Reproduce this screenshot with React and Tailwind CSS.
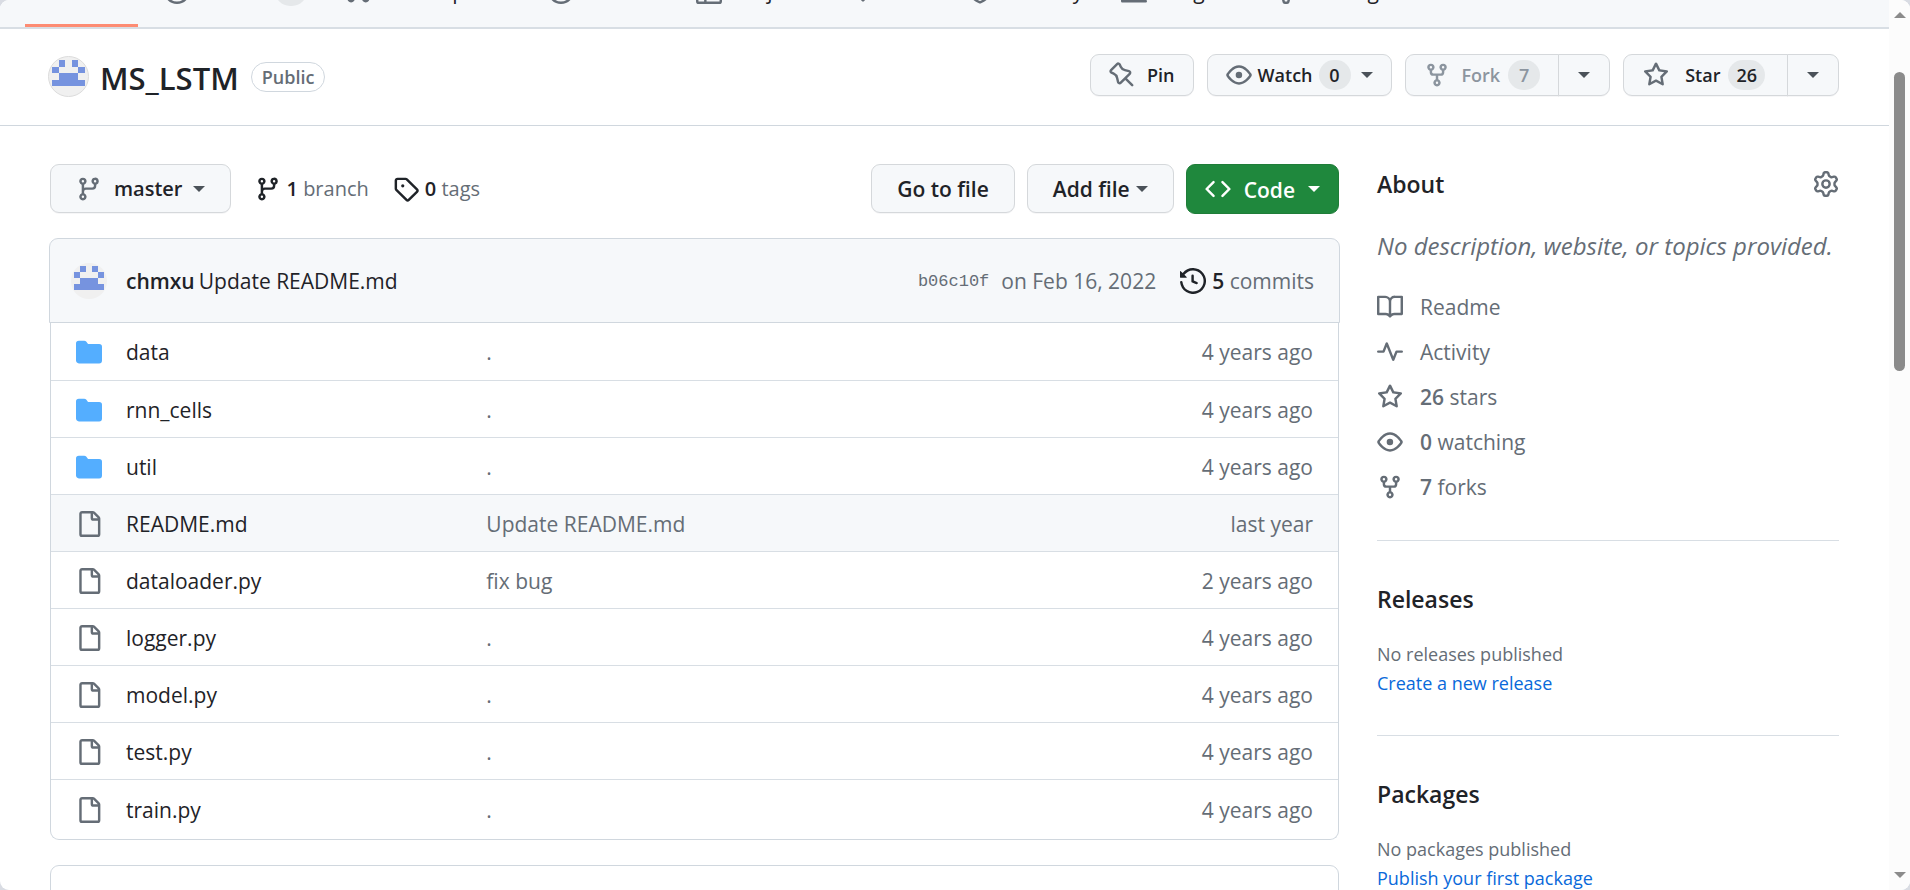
const icons = {
  pin: "M4.456.734a1.75 1.75 0 012.826.504l.613 1.327a3.081 3.081 0 002.084 1.707l2.454.584c1.332.317 1.8 1.972.832 2.94L11.06 10l3.72 3.72a.75.75 0 11-1.061 1.06L10 11.06l-2.204 2.205c-.968.968-2.623.5-2.94-.832l-.584-2.454a3.081 3.081 0 00-1.707-2.084l-1.327-.613a1.75 1.75 0 01-.504-2.826L4.456.734zM5.92 1.866a.25.25 0 00-.404-.072L1.794 5.516a.25.25 0 00.072.404l1.328.613A4.582 4.582 0 015.73 9.63l.584 2.454a.25.25 0 00.42.12l5.47-5.47a.25.25 0 00-.12-.42L9.63 5.73a4.581 4.581 0 01-3.098-2.537L5.92 1.866z",
  eye: "M8 2c1.981 0 3.671.992 4.933 2.078 1.27 1.091 2.187 2.345 2.637 3.023a1.62 1.62 0 0 1 0 1.798c-.45.678-1.367 1.932-2.637 3.023C11.67 13.008 9.981 14 8 14c-1.981 0-3.671-.992-4.933-2.078C1.797 10.83.88 9.576.43 8.898a1.62 1.62 0 0 1 0-1.798c.45-.677 1.367-1.931 2.637-3.022C4.33 2.992 6.019 2 8 2ZM1.679 7.932a.12.12 0 0 0 0 .136c.411.622 1.241 1.75 2.366 2.717C5.176 11.758 6.527 12.5 8 12.5c1.473 0 2.825-.742 3.955-1.715 1.124-.967 1.954-2.096 2.366-2.717a.12.12 0 0 0 0-.136c-.412-.621-1.242-1.75-2.366-2.717C10.824 4.242 9.473 3.5 8 3.5c-1.473 0-2.825.742-3.955 1.715-1.124.967-1.954 2.096-2.366 2.717ZM8 10a2 2 0 1 1-.001-3.999A2 2 0 0 1 8 10Z",
  fork: "M5 5.372v.878c0 .414.336.75.75.75h4.5a.75.75 0 0 0 .75-.75v-.878a2.25 2.25 0 1 1 1.5 0v.878a2.25 2.25 0 0 1-2.25 2.25h-1.5v2.128a2.251 2.251 0 1 1-1.5 0V8.5h-1.5A2.25 2.25 0 0 1 3.5 6.25v-.878a2.25 2.25 0 1 1 1.5 0ZM5 3.25a.75.75 0 1 0-1.5 0 .75.75 0 0 0 1.5 0Zm6.75.75a.75.75 0 1 0 0-1.5.75.75 0 0 0 0 1.5Zm-3 8.75a.75.75 0 1 0-1.5 0 .75.75 0 0 0 1.5 0Z",
  star: "M8 .25a.75.75 0 0 1 .673.418l1.882 3.815 4.21.612a.75.75 0 0 1 .416 1.279l-3.046 2.97.719 4.192a.751.751 0 0 1-1.088.791L8 12.347l-3.766 1.98a.75.75 0 0 1-1.088-.79l.72-4.194L.818 6.374a.75.75 0 0 1 .416-1.28l4.21-.611L7.327.668A.75.75 0 0 1 8 .25Zm0 2.445L6.615 5.5a.75.75 0 0 1-.564.41l-3.097.45 2.24 2.184a.75.75 0 0 1 .216.664l-.528 3.084 2.769-1.456a.75.75 0 0 1 .698 0l2.77 1.456-.53-3.084a.75.75 0 0 1 .216-.664l2.24-2.183-3.096-.45a.75.75 0 0 1-.564-.41L8 2.694Z",
  branch: "M9.5 3.25a2.25 2.25 0 1 1 3 2.122V6A2.5 2.5 0 0 1 10 8.5H6a1 1 0 0 0-1 1v1.128a2.251 2.251 0 1 1-1.5 0V5.372a2.25 2.25 0 1 1 1.5 0v1.836A2.493 2.493 0 0 1 6 7h4a1 1 0 0 0 1-1v-.628A2.25 2.25 0 0 1 9.5 3.25Zm-6 0a.75.75 0 1 0 1.5 0 .75.75 0 0 0-1.5 0Zm8.25-.75a.75.75 0 1 0 0 1.5.75.75 0 0 0 0-1.5ZM4.25 12a.75.75 0 1 0 0 1.5.75.75 0 0 0 0-1.5Z",
  tag: "M1 7.775V2.75C1 1.784 1.784 1 2.75 1h5.025c.464 0 .91.184 1.238.513l6.25 6.25a1.75 1.75 0 0 1 0 2.474l-5.026 5.026a1.75 1.75 0 0 1-2.474 0l-6.25-6.25A1.752 1.752 0 0 1 1 7.775Zm1.5 0c0 .066.026.13.073.177l6.25 6.25a.25.25 0 0 0 .354 0l5.025-5.025a.25.25 0 0 0 0-.354l-6.25-6.25a.25.25 0 0 0-.177-.073H2.75a.25.25 0 0 0-.25.25ZM6 5a1 1 0 1 1 0 2 1 1 0 0 1 0-2Z",
  history: "m.427 1.927 1.215 1.215a8.002 8.002 0 1 1-1.6 5.685.75.75 0 1 1 1.493-.154 6.5 6.5 0 1 0 1.18-4.458l1.358 1.358A.25.25 0 0 1 3.896 6H.25A.25.25 0 0 1 0 5.75V2.104a.25.25 0 0 1 .427-.177ZM7.75 4a.75.75 0 0 1 .75.75v2.992l2.028.812a.75.75 0 0 1-.557 1.392l-2.5-1A.751.751 0 0 1 7 8.25v-3.5A.75.75 0 0 1 7.75 4Z",
  folder: "M1.75 1A1.75 1.75 0 0 0 0 2.75v10.5C0 14.216.784 15 1.75 15h12.5A1.75 1.75 0 0 0 16 13.25v-8.5A1.75 1.75 0 0 0 14.25 3H7.5a.25.25 0 0 1-.2-.1l-.9-1.2C6.07 1.26 5.55 1 5 1H1.75Z",
  file: "M2 1.75C2 .784 2.784 0 3.75 0h6.586c.464 0 .909.184 1.237.513l2.914 2.914c.329.328.513.773.513 1.237v9.586A1.75 1.75 0 0 1 13.25 16h-9.5A1.75 1.75 0 0 1 2 14.25Zm1.75-.25a.25.25 0 0 0-.25.25v12.5c0 .138.112.25.25.25h9.5a.25.25 0 0 0 .25-.25V6h-2.75A1.75 1.75 0 0 1 9 4.25V1.5Zm6.75.062V4.25c0 .138.112.25.25.25h2.688l-.011-.013-2.914-2.914-.013-.011Z",
  code: "m11.28 3.22 4.25 4.25a.75.75 0 0 1 0 1.06l-4.25 4.25a.749.749 0 0 1-1.275-.326.749.749 0 0 1 .215-.734L13.94 8l-3.72-3.72a.749.749 0 0 1 .326-1.275.749.749 0 0 1 .734.215Zm-6.56 0a.751.751 0 0 1 1.042.018.751.751 0 0 1 .018 1.042L2.06 8l3.72 3.72a.749.749 0 0 1-.326 1.275.749.749 0 0 1-.734-.215L.47 8.53a.75.75 0 0 1 0-1.06Z",
  gear: "M8 0a8.2 8.2 0 0 1 .701.031C9.444.095 9.99.645 10.16 1.29l.288 1.107c.018.066.079.158.212.224.231.114.454.243.668.386.123.082.233.09.299.071l1.103-.303c.644-.176 1.392.021 1.82.63.27.385.506.792.704 1.218.315.675.111 1.422-.364 1.891l-.814.806c-.049.048-.098.147-.088.294.016.257.016.515 0 .772-.01.147.038.246.088.294l.814.806c.475.469.679 1.216.364 1.891a7.977 7.977 0 0 1-.704 1.217c-.428.61-1.176.807-1.82.63l-1.102-.302c-.067-.019-.177-.011-.3.071a5.909 5.909 0 0 1-.668.386c-.133.066-.194.158-.211.224l-.29 1.106c-.168.646-.715 1.196-1.458 1.26a8.006 8.006 0 0 1-1.402 0c-.743-.064-1.289-.614-1.458-1.26l-.289-1.106c-.018-.066-.079-.158-.212-.224a5.738 5.738 0 0 1-.668-.386c-.123-.082-.233-.09-.299-.071l-1.103.303c-.644.176-1.392-.021-1.82-.63a8.12 8.12 0 0 1-.704-1.218c-.315-.675-.111-1.422.363-1.891l.815-.806c.05-.048.098-.147.088-.294a6.214 6.214 0 0 1 0-.772c.01-.147-.038-.246-.088-.294l-.815-.806C.635 6.045.431 5.298.746 4.623a7.92 7.92 0 0 1 .704-1.217c.428-.61 1.176-.807 1.82-.63l1.102.302c.067.019.177.011.3-.071.214-.143.437-.272.668-.386.133-.066.194-.158.211-.224l.29-1.106C6.009.645 6.556.095 7.299.03 7.53.01 7.764 0 8 0Zm-.571 1.525c-.036.003-.108.036-.137.146l-.289 1.105c-.147.561-.549.967-.998 1.189-.173.086-.34.183-.5.29-.417.278-.97.423-1.529.27l-1.103-.303c-.109-.03-.175.016-.195.045-.22.312-.412.644-.573.99-.014.031-.021.11.059.19l.815.806c.411.406.562.957.53 1.456a4.709 4.709 0 0 0 0 .582c.032.499-.119 1.05-.53 1.456l-.815.806c-.081.08-.073.159-.059.19.162.346.353.677.573.989.02.03.085.076.195.046l1.102-.303c.56-.153 1.113-.008 1.53.27.161.107.328.204.501.29.447.222.85.629.997 1.189l.289 1.105c.029.109.101.143.137.146a6.6 6.6 0 0 0 1.142 0c.036-.003.108-.036.137-.146l.289-1.105c.147-.561.549-.967.998-1.189.173-.086.34-.183.5-.29.417-.278.97-.423 1.529-.27l1.103.303c.109.029.175-.016.195-.045.22-.313.411-.644.573-.99.014-.031.021-.11-.059-.19l-.815-.806c-.411-.406-.562-.957-.53-1.456a4.709 4.709 0 0 0 0-.582c-.032-.499.119-1.05.53-1.456l.815-.806c.081-.08.073-.159.059-.19a6.464 6.464 0 0 0-.573-.989c-.02-.03-.085-.076-.195-.046l-1.102.303c-.56.153-1.113.008-1.53-.27a4.44 4.44 0 0 0-.501-.29c-.447-.222-.85-.629-.997-1.189l-.289-1.105c-.029-.11-.101-.143-.137-.146a6.6 6.6 0 0 0-1.142 0ZM11 8a3 3 0 1 1-6 0 3 3 0 0 1 6 0ZM9.5 8a1.5 1.5 0 1 0-3.001.001A1.5 1.5 0 0 0 9.5 8Z",
  book: "M0 1.75A.75.75 0 0 1 .75 1h4.253c1.227 0 2.317.59 3 1.501A3.743 3.743 0 0 1 11.006 1h4.245a.75.75 0 0 1 .75.75v10.5a.75.75 0 0 1-.75.75h-4.507a2.25 2.25 0 0 0-1.591.659l-.622.621a.75.75 0 0 1-1.06 0l-.622-.621A2.25 2.25 0 0 0 5.258 13H.75a.75.75 0 0 1-.75-.75Zm7.251 10.324.004-5.073-.002-2.253A2.25 2.25 0 0 0 5.003 2.5H1.5v9h3.757a3.75 3.75 0 0 1 1.994.574ZM8.755 4.75l-.004 7.322a3.752 3.752 0 0 1 1.992-.572H14.5v-9h-3.495a2.25 2.25 0 0 0-2.25 2.25Z",
  pulse: "M6 2c.306 0 .582.187.696.471L10 10.731l1.304-3.26A.751.751 0 0 1 12 7h3.25a.75.75 0 0 1 0 1.5h-2.742l-1.812 4.528a.751.751 0 0 1-1.392 0L6 4.77 4.696 8.03A.75.75 0 0 1 4 8.5H.75a.75.75 0 0 1 0-1.5h2.742l1.812-4.529A.751.751 0 0 1 6 2Z",
  issue: "M8 9.5a1.5 1.5 0 1 0 0-3 1.5 1.5 0 0 0 0 3ZM8 0a8 8 0 1 1 0 16A8 8 0 0 1 8 0ZM1.5 8a6.5 6.5 0 1 0 13 0 6.5 6.5 0 0 0-13 0Z",
  pull: "M1.5 3.25a2.25 2.25 0 1 1 3 2.122v5.256a2.251 2.251 0 1 1-1.5 0V5.372A2.25 2.25 0 0 1 1.5 3.25Zm5.677-.177L9.573.677A.25.25 0 0 1 10 .854V2.5h1A2.5 2.5 0 0 1 13.5 5v5.628a2.251 2.251 0 1 1-1.5 0V5a1 1 0 0 0-1-1h-1v1.646a.25.25 0 0 1-.427.177L7.177 3.427a.25.25 0 0 1 0-.354ZM3.75 2.5a.75.75 0 1 0 0 1.5.75.75 0 0 0 0-1.5Zm0 9.5a.75.75 0 1 0 0 1.5.75.75 0 0 0 0-1.5Zm8.25.75a.75.75 0 1 0 1.5 0 .75.75 0 0 0-1.5 0Z",
  play: "M8 0a8 8 0 1 1 0 16A8 8 0 0 1 8 0ZM1.5 8a6.5 6.5 0 1 0 13 0 6.5 6.5 0 0 0-13 0Zm4.879-2.773 4.264 2.559a.25.25 0 0 1 0 .428l-4.264 2.559A.25.25 0 0 1 6 10.559V5.442a.25.25 0 0 1 .379-.215Z",
  table: "M0 1.75C0 .784.784 0 1.75 0h12.5C15.216 0 16 .784 16 1.75v12.5A1.75 1.75 0 0 1 14.25 16H1.75A1.75 1.75 0 0 1 0 14.25ZM6.5 6.5v8h7.75a.25.25 0 0 0 .25-.25V6.5Zm8-1.5V1.75a.25.25 0 0 0-.25-.25H6.5V5Zm-13 1.5v7.75c0 .138.112.25.25.25H5v-8ZM5 5V1.5H1.75a.25.25 0 0 0-.25.25V5Z",
  shield: "M7.467.133a1.748 1.748 0 0 1 1.066 0l5.25 1.68A1.75 1.75 0 0 1 15 3.48V7c0 1.566-.32 3.182-1.303 4.682-.983 1.498-2.585 2.813-5.032 3.855a1.697 1.697 0 0 1-1.33 0c-2.447-1.042-4.049-2.357-5.032-3.855C1.32 10.182 1 8.566 1 7V3.48a1.755 1.755 0 0 1 1.217-1.667Zm.61 1.429a.25.25 0 0 0-.153 0l-5.25 1.68a.25.25 0 0 0-.174.238V7c0 1.358.275 2.666 1.057 3.86.784 1.194 2.121 2.34 4.366 3.297a.196.196 0 0 0 .154 0c2.245-.956 3.582-2.104 4.366-3.298C13.225 9.666 13.5 8.36 13.5 7V3.48a.251.251 0 0 0-.174-.237l-5.25-1.68Z",
  graph: "M1.5 1.75V13.5h13.75a.75.75 0 0 1 0 1.5H.75a.75.75 0 0 1-.75-.75V1.75a.75.75 0 0 1 1.5 0Z",
};

const Icon = ({ name, className = "text-[#656d76]" }) => (
  <svg viewBox="0 0 16 16" fill="currentColor" aria-hidden="true" className={`size-[26px] shrink-0 ${className}`}>
    <path d={icons[name]} />
  </svg>
);

const Caret = ({ className = "text-[#4b5259]" }) => (
  <svg viewBox="0 0 12 6" fill="currentColor" aria-hidden="true" className={`h-[6px] w-3 shrink-0 ${className}`}>
    <path d="M0 0h12L6 6z" />
  </svg>
);

// 5x5 identicon
const Avatar = ({ className }) => (
  <svg viewBox="0 0 12 12" role="img" aria-label="chmxu" shapeRendering="crispEdges" className={`shrink-0 rounded-full bg-[#f0f0f0] ${className}`}>
    <path fill="#7693df" d="M3 1h2v2H3zM7 1h2v2H7zM1 3h2v2H1zM9 3h2v2H9zM3 5h6v2h2v2H1V7h2z" />
  </svg>
);

const Counter = ({ children }) => (
  <span className="flex h-[30px] min-w-8 items-center justify-center rounded-full bg-[#e5e8ea] px-2">
    {children}
  </span>
);

const tabs = [
  { icon: "code", label: "Code" },
  { icon: "issue", label: "Issues", count: 3 },
  { icon: "pull", label: "Pull requests" },
  { icon: "play", label: "Actions" },
  { icon: "table", label: "Projects" },
  { icon: "book", label: "Wiki" },
  { icon: "shield", label: "Security" },
  { icon: "graph", label: "Insights" },
  { icon: "gear", label: "Settings" },
];

const files = [
  { name: "data", type: "folder", message: ".", age: "4 years ago" },
  { name: "rnn_cells", type: "folder", message: ".", age: "4 years ago" },
  { name: "util", type: "folder", message: ".", age: "4 years ago" },
  { name: "README.md", type: "file", message: "Update README.md", age: "last year", active: true },
  { name: "dataloader.py", type: "file", message: "fix bug", age: "2 years ago" },
  { name: "logger.py", type: "file", message: ".", age: "4 years ago" },
  { name: "model.py", type: "file", message: ".", age: "4 years ago" },
  { name: "test.py", type: "file", message: ".", age: "4 years ago" },
  { name: "train.py", type: "file", message: ".", age: "4 years ago" },
];

const stats = [
  { icon: "book", label: "Readme" },
  { icon: "pulse", label: "Activity" },
  { icon: "star", count: 26, label: "stars" },
  { icon: "eye", count: 0, label: "watching" },
  { icon: "fork", count: 7, label: "forks" },
];

const btn = "flex items-center border border-[#d5d8db] bg-[#f6f8fa] font-semibold shadow-[0_1px_0_rgba(31,35,40,0.04)]";
const smallBtn = `${btn} h-[42px] text-[18px]`;
const bigBtn = `${btn} h-[49px] rounded-[9px]`;

const TabBar = () => (
  <nav className="flex h-[29px] items-end overflow-hidden border-b-2 border-[#d8dee4] bg-[#f6f8fa] pl-[25px]">
    <ul className="flex gap-[14px] text-[21px]">
      {tabs.map((tab, i) => (
        <li key={tab.label}>
          <a
            href="#"
            className={`flex h-16 items-center gap-3 border-b-[3px] px-3 pb-[6px] ${i === 0 ? "border-[#fd8c73] font-semibold" : "border-transparent"}`}
          >
            <Icon name={tab.icon} />
            {tab.label}
            {tab.count && <Counter>{tab.count}</Counter>}
          </a>
        </li>
      ))}
    </ul>
  </nav>
);

const RepoHeader = () => (
  <header className="flex h-[97px] items-start justify-between border-b border-[#d0d7de] pr-[50px] pl-12 pt-[25px]">
    <div className="flex items-center pt-[2px]">
      <Avatar className="size-[41px] border border-[#dcdcdc]" />
      <h1 className="ml-[11px] pt-[3px] text-[31px] leading-[38px] font-semibold">
        <a href="#">MS_LSTM</a>
      </h1>
      <span className="ml-3 flex h-[30px] items-center rounded-full border border-[#d0d7de] px-[10px] text-[18px] font-semibold text-[#656d76]">
        Public
      </span>
    </div>

    <div className="flex gap-[13px]">
      <button className={`${smallBtn} gap-3 rounded-[9px] px-[18px]`}>
        <Icon name="pin" />
        Pin
      </button>
      <button className={`${smallBtn} gap-[6px] rounded-[9px] px-[18px]`}>
        <Icon name="eye" />
        Watch
        <Counter>0</Counter>
        <Caret className="ml-1 text-[#4b5259]" />
      </button>
      <div className="flex">
        <button className={`${smallBtn} gap-2 rounded-l-[9px] px-[18px] text-[#8c959f]`}>
          <Icon name="fork" className="mr-1 text-[#8c959f]" />
          Fork
          <Counter>7</Counter>
        </button>
        <button aria-label="See your forks" className={`${smallBtn} -ml-px rounded-r-[9px] px-[19px]`}>
          <Caret />
        </button>
      </div>
      <div className="flex">
        <button className={`${smallBtn} gap-2 rounded-l-[9px] pr-[22px] pl-[19px]`}>
          <Icon name="star" className="mr-2 text-[#656d76]" />
          Star
          <Counter>26</Counter>
        </button>
        <button aria-label="Add to list" className={`${smallBtn} -ml-px rounded-r-[9px] px-[19px]`}>
          <Caret />
        </button>
      </div>
    </div>
  </header>
);

const Toolbar = () => (
  <div className="flex h-[50px] items-start justify-between">
    <div className="flex items-center text-[20px]">
      <button className={`${bigBtn} px-[25px]`}>
        <Icon name="branch" />
        <span className="mr-[10px] ml-3 pt-px">master</span>
        <Caret />
      </button>
      <a href="#" className="ml-6 flex items-center gap-[6px] text-[#656d76]">
        <Icon name="branch" className="text-[#1f2328]" />
        <span>
          <strong className="font-semibold text-[#1f2328]">1</strong> branch
        </span>
      </a>
      <a href="#" className="ml-6 flex items-center gap-[6px] text-[#656d76]">
        <Icon name="tag" className="text-[#1f2328]" />
        <span>
          <strong className="font-semibold text-[#1f2328]">0</strong> tags
        </span>
      </a>
    </div>
    <div className="flex items-start gap-3">
      <button className={`${bigBtn} px-[25px] pt-px`}>Go to file</button>
      <button className={`${bigBtn} gap-[6px] px-[25px] pt-px`}>
        Add file
        <Caret />
      </button>
      <button className="flex h-[50px] items-center rounded-[9px] border border-[#1f7d39] bg-[#1f883d] px-[18px] font-semibold text-white">
        <Icon name="code" className="text-white" />
        <span className="mx-[13px] pt-px">Code</span>
        <Caret className="text-white" />
      </button>
    </div>
  </div>
);

const FileTable = () => (
  <div className="mt-6">
    <div className="-mx-px flex h-[85px] items-center rounded-t-[9px] border border-[#d0d7de] bg-[#f6f8fa] pt-px pr-[25px] pl-[21px]">
      <Avatar className="size-9" />
      <a href="#" className="ml-[19px] font-semibold">chmxu</a>
      <a href="#" className="ml-1">Update README.md</a>
      <div className="ml-auto flex items-center text-[#656d76]">
        <a href="#" className="pt-[2px] font-['Liberation_Mono',monospace] text-[17px]">b06c10f</a>
        <span className="ml-3">on Feb 16, 2022</span>
        <a href="#" className="ml-6 flex items-center gap-[6px]">
          <Icon name="history" className="text-[#1f2328]" />
          <span>
            <strong className="font-semibold text-[#1f2328]">5</strong> commits
          </span>
        </a>
      </div>
    </div>
    <div className="rounded-b-[9px] border border-t-0 border-[#d0d7de] pb-px">
      <table className="w-full table-fixed">
        <tbody>
          {files.map((file) => (
            <tr
              key={file.name}
              className={`h-[57px] border-b border-[#d8dee4] last:h-[59px] last:border-b-0 ${file.active ? "bg-[#f6f8fa]" : ""}`}
            >
              <td className="w-[75px] pt-[2px] pl-[25px]">
                <Icon name={file.type} className={file.type === "folder" ? "text-[#54aeff]" : "text-[#656d76]"} />
              </td>
              <td className="w-[28%] pt-[2px]">
                <a href="#">{file.name}</a>
              </td>
              <td className="pt-[2px] text-[#656d76]">
                <a href="#">{file.message}</a>
              </td>
              <td className="w-[20%] pt-[2px] pr-[25px] text-right text-[#656d76]">{file.age}</td>
            </tr>
          ))}
        </tbody>
      </table>
    </div>
  </div>
);

const SideSection = ({ title, text, link }) => (
  <section className="mt-[37px] border-t border-[#d8dee4] pt-[37px]">
    <h2 className="text-[23px] leading-[42px] font-semibold">{title}</h2>
    <p className="mt-[20px] text-[18px] leading-[29px] text-[#656d76]">{text}</p>
    <a href="#" className="block text-[18px] leading-[29px] text-[#0969da]">{link}</a>
  </section>
);

const Sidebar = () => (
  <aside className="w-[462px] shrink-0">
    <div className="flex h-[39px] items-center justify-between">
      <h2 className="text-[23px] font-semibold">About</h2>
      <button aria-label="Edit repository details">
        <Icon name="gear" />
      </button>
    </div>
    <p className="mt-[22px] text-[24px] leading-[42px] whitespace-nowrap text-[#656d76] italic">
      No description, website, or topics provided.
    </p>
    <ul className="mt-[17px]">
      {stats.map((stat) => (
        <li key={stat.label}>
          <a href="#" className="flex h-[45px] items-center gap-[17px] text-[#656d76]">
            <Icon name={stat.icon} />
            <span>
              {stat.count !== undefined && <strong className="font-semibold">{stat.count} </strong>}
              {stat.label}
            </span>
          </a>
        </li>
      ))}
    </ul>
    <div className="-mt-[6px]">
      <SideSection title="Releases" text="No releases published" link="Create a new release" />
      <SideSection title="Packages" text="No packages published" link="Publish your first package" />
    </div>
  </aside>
);

const Scrollbar = () => (
  <div className="flex w-[21px] shrink-0 flex-col items-center bg-[#fcfcfc] py-3" aria-hidden="true">
    <Caret className="rotate-180 text-[#8b8b8b]" />
    <div className="mt-[54px] h-[299px] w-[11px] rounded-full bg-[#8b8b8b]" />
    <Caret className="mt-auto text-[#8b8b8b]" />
  </div>
);

const App = () => {
  return (
    <div className="h-screen bg-[#d9dce3]">
      <div className="flex h-full overflow-hidden rounded-[9px] bg-white font-['Open_Sans','Noto_Sans',sans-serif] text-[21px] leading-[30px] text-[#1f2328]">
        <div className="min-w-0 flex-1">
          <TabBar />
          <RepoHeader />
          <main className="flex gap-[38px] pt-[38px] pr-[50px] pl-[50px]">
            <div className="min-w-0 flex-1">
              <Toolbar />
              <FileTable />
              <div className="mt-[25px] h-24 rounded-[9px] border border-[#d0d7de]" />
            </div>
            <Sidebar />
          </main>
        </div>
        <Scrollbar />
      </div>
    </div>
  );
};

export default App;
